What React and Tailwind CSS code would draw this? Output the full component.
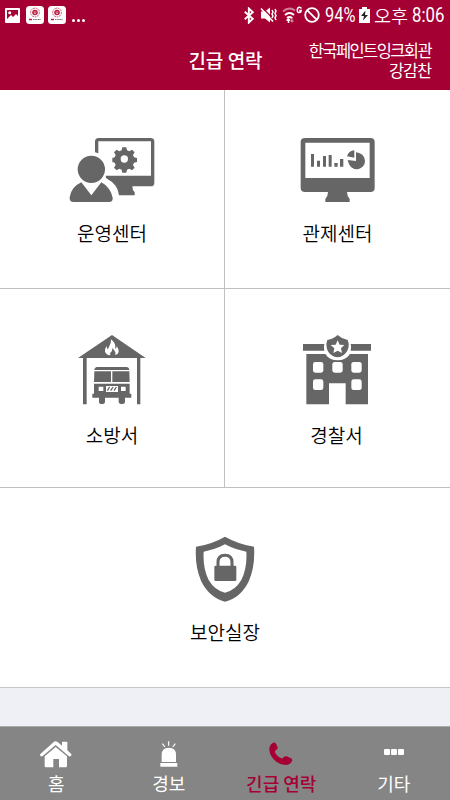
import React from "react";

function OperationIcon() {
  return (
    <svg className="h-[66px] w-[86px] fill-[#666]" viewBox="27 21 258 198">
      <path d="M105 67V35q0-11 11-11h156q11 0 11 11v123q0 11-11 11h-55q0 12 7 18v9h-47q-3-33-36-50-4-2-4-9h136V34H115v36z" />
      <circle cx="94" cy="118" r="41" />
      <path d="M64 157l30 39 30-39q14 7 23 20 9 13 11 26 1 13-11 13H41q-14 0-12-14 4-31 35-45z" />
      <path
        fillRule="evenodd"
        d="M187 52h12l2 9 7 3 8-5 8 8-5 8 3 7 9 2v12l-9 2-3 7 5 8-8 8-8-5-7 3-2 9h-12l-2-9-7-3-8 5-8-8 5-8-3-7-7-2V84l7-2 3-7-5-8 8-8 8 5 7-3zM193 76a11 11 0 100 22 11 11 0 000-22z"
      />
    </svg>
  );
}

function MonitorIcon() {
  return (
    <svg className="h-[66px] w-[75px] fill-[#666]" viewBox="45 21 225 198">
      <path
        fillRule="evenodd"
        d="M60 24h196q13 0 13 12v137q0 13-13 13h-70q0 12 8 21v9h-73v-9q8-9 8-21H60q-13 0-13-13V36q0-12 13-12zM61 38v106h193V38z"
      />
      <path d="M78 72h9v38h-9zM96 92h9v18h-9zM114 78h9v32h-9zM131 75h9v35h-9zM148 99h10v11h-10zM165 87h10v23h-10z" />
      <path d="M213 93l-25-3q4 17 13 23 13 8 25 2 13-6 14-21 0-20-20-26-3-1-7-1z" />
      <path d="M208 83V61q-17 1-22 18z" />
    </svg>
  );
}

function FireStationIcon() {
  return (
    <svg className="h-[71px] w-[68px] fill-[#666]" viewBox="39 27 204 213">
      <path d="M141 30L242 99H226V238H216V99H65V238H54V99H39z" />
      <path
        fill="#fff"
        d="M138 43q15 11 13 29 5-3 4-9 7 9 6 18-2 8-11 9 4-6-1-12-3-4-7-9 1 9-5 13-3 4-1 9-13-2-16-11-1-9 5-17l2 10q3-1 5-8 7-9 6-22z"
      />
      <path d="M95 126h91q7 1 7 9H88q0-8 7-9zM88 139h50v32H87zM142 139h51l1 32h-52zM87 176h107v30h5v12h-19v13q0 6-8 6-11 0-11-7v-12h-41v12q0 7-10 7-8 0-8-7v-12H82v-12h5z" />
      <path fill="#fff" d="M101 185h14v13h-14zM168 185h14v13h-14zM123 183h36v18h-36z" />
      <path
        fill="none"
        stroke="#666"
        strokeWidth="4"
        d="M127 197l7-11M137 197l7-11M147 197l7-11"
      />
    </svg>
  );
}

function PoliceStationIcon() {
  return (
    <svg className="h-[71px] w-[68px] fill-[#666]" viewBox="39 27 204 213">
      <path d="M39 57h64q-3 11 0 20H39zM182 57h61v20h-61q3-10 0-20zM49 87h57q12 19 37 19 24 0 37-19h54v151h-67v-63h-50v63H49z" />
      <path d="M143 30q13 12 30 15 7 17-1 32-10 18-29 20-21-2-30-20-7-17-1-32 18-3 31-15z" />
      <path fill="#fff" d="M143 46l6 13 14 1-10 10 3 14-13-7-13 7 3-14-11-10 15-1z" />
      <g fill="#fff">
        <rect x="69" y="111" width="31" height="32" rx="7" />
        <rect x="127" y="111" width="31" height="32" rx="7" />
        <rect x="184" y="111" width="31" height="32" rx="7" />
        <rect x="69" y="163" width="31" height="32" rx="7" />
        <rect x="184" y="163" width="31" height="32" rx="7" />
      </g>
    </svg>
  );
}

function SecurityIcon() {
  return (
    <svg className="h-[66px] w-[60px] fill-[#666]" viewBox="45 18 180 198">
      <path
        fillRule="evenodd"
        d="M135 20q41 23 87 30 4 57-15 102-24 51-72 63-48-13-72-63-19-45-15-102 47-7 87-30zM135 43q-30 16-64 22-3 48 15 85 18 31 49 38 31-7 49-38 18-37 15-85-34-6-64-22z"
      />
      <path d="M107 107h58q4 0 4 4v38q0 4-4 4h-58q-4 0-4-4v-38q0-4 4-4z" />
      <path fill="none" stroke="#666" strokeWidth="9" d="M114 109V97q0-21 21-21t21 21v12" />
    </svg>
  );
}

function HomeIcon() {
  return (
    <svg className="h-[27px] w-8 fill-white" viewBox="121 182 96 81">
      <path d="M163 184q5-3 10 0l14 12v-10q0-2 2-2h12q2 0 2 2v24l11 10q3 3 0 6-3 4-7 1l-39-33-39 33q-5 3-7-1-2-4 1-6z" />
      <path d="M168 200l34 28v29q0 4-4 4h-20v-25h-17v25h-22q-4 0-4-4v-29z" />
    </svg>
  );
}

function SirenIcon() {
  return (
    <svg className="h-[27px] w-[18px] fill-white" viewBox="479 181 54 81">
      <path d="M484 244v-22q0-21 22-21 21 0 21 21v22zM480 247h51v11h-51z" />
      <path fill="none" stroke="#fff" strokeWidth="3.5" d="M505 182v13M486 189l8 10M525 189l-8 10" />
    </svg>
  );
}

function PhoneIcon() {
  return (
    <svg className="h-6 w-6 fill-[#a50034]" viewBox="134 183 72 72">
      <path d="M145 186q6-4 10 2l5 11q1 5-5 8-4 2-3 7 6 13 19 18 4 1 7-3 4-5 9-3l13 6q6 4 2 10-6 10-19 10-19-1-33-15-16-16-15-36 2-11 10-15z" />
    </svg>
  );
}

function StatusIcons() {
  return (
    <div className="flex h-[30px] items-center text-white">
      <svg className="h-[17px] w-3" viewBox="0 0 12 18" fill="none" stroke="currentColor" strokeWidth="2">
        <path d="M1.5 5L10 12.5 5.8 16.5V1.5L10 5.5 1.5 13" />
      </svg>
      <svg className="ml-[5px] h-4 w-[17px]" viewBox="0 0 17 16" fill="currentColor">
        <path d="M1 4.500h4l5-4v15l-5-4H1z" />
        <path d="M2 0l12 13" stroke="#a50034" strokeWidth="1.200" />
        <path d="M1 1.500l12 13" stroke="currentColor" strokeWidth="1.600" />
        <path d="M12 3l1 2-1 2 1 2-1 2M15 2l1 2-1 2.500 1 2-1 2.500 1 2" fill="none" stroke="currentColor" strokeWidth="1.500" />
      </svg>
      <svg className="ml-[5px] h-[18px] w-[21px]" viewBox="0 0 21 18" fill="none" stroke="currentColor">
        <path d="M1 5.500Q7 0 13 4.500" strokeWidth="1.900" opacity=".5" />
        <path d="M3 9Q7.500 5 12 9M5 12Q7.500 10 10 12" strokeWidth="2" />
        <path d="M6.500 17v-4M4.500 14.500L6.500 13l1.500 1.500" strokeWidth="1.500" />
        <path d="M10 11v5M8.500 14.500L10 16l1.500-1.500" strokeWidth="1.200" opacity=".5" />
        <path d="M19.500 2.500Q18.500 1 17 1.200 15.300 1.500 15.300 4.200t1.900 2.300q2-.2 2-2h-2" strokeWidth="1.500" />
      </svg>
      <svg className="ml-px h-4 w-4" viewBox="0 0 16 16" fill="none" stroke="currentColor" strokeWidth="1.800">
        <circle cx="8" cy="8" r="6.800" />
        <path d="M3.300 3.300l9.400 9.400" />
      </svg>
      <span className="ml-[5px] w-[31px] origin-left scale-x-[0.82] text-[20px] leading-[30px]">94%</span>
      <svg className="ml-[3px] h-4 w-[11px]" viewBox="0 0 11 16">
        <path d="M3 0h5v2h3v14H0V2h3z" fill="white" />
        <path d="M6.500 3.500L2 9h3l-1 4.500L9 8H6z" fill="#222" />
      </svg>
      <span className="ml-1 w-[34px] font-['Noto_Sans_CJK_KR',sans-serif] text-[18.500px] leading-[30px] font-[350] whitespace-nowrap">오후</span>
      <span className="ml-[4px] w-8 origin-left scale-x-[0.84] text-[20px] leading-[30px]">8:06</span>
    </div>
  );
}

function AppBadge() {
  return (
    <svg className="h-[18px] w-[18px]" viewBox="0 0 18 18">
      <rect width="18" height="18" rx="3.500" fill="white" />
      <circle cx="9" cy="6.500" r="4.400" fill="none" stroke="#c23c5c" strokeWidth=".8" strokeDasharray="2 .6" />
      <circle cx="9" cy="6.500" r="2.800" fill="#b91c3e" />
      <path d="M7.500 6h3M8 7.500h2" stroke="white" strokeWidth=".6" />
      <path d="M3 13.500h3" stroke="#b91c3e" strokeWidth="1.500" />
      <path d="M7 13.500h8" stroke="#777" strokeWidth="1" strokeDasharray="1.200 .4" />
    </svg>
  );
}

function Tile({ icon, label, className = "" }) {
  return (
    <button className={`flex flex-col items-center bg-white ${className}`}>
      {icon}
      <span className="mt-[15px] text-[19px] leading-[30px] font-[350] text-black">{label}</span>
    </button>
  );
}

function NavItem({ icon, label, active = false }) {
  return (
    <button className={`flex flex-col items-center pt-3 ${active ? "text-[#a50034]" : "text-white"}`}>
      <span className="flex h-[30px] items-center">{icon}</span>
      <span className={`text-[18px] leading-7 whitespace-nowrap ${active ? "font-medium" : ""}`}>{label}</span>
    </button>
  );
}

export default function App() {
  return (
    <div className="flex h-[800px] w-[450px] flex-col overflow-hidden bg-[#eff0f5] font-['Noto_Sans_CJK_KR',sans-serif]">
      <div className="flex h-[30px] items-center justify-between bg-[#a50034] pr-[6px] pl-[5px] font-[Roboto,sans-serif]">
        <div className="flex items-center">
          <svg className="h-[15px] w-[15px]" viewBox="0 0 15 15">
            <rect width="15" height="15" rx="1" fill="white" />
            <path d="M2 2h11v6l-2-2-3 3-2-2-4 4z" fill="#a50034" />
            <circle cx="4.700" cy="4.700" r="1.500" fill="white" />
          </svg>
          <div className="ml-[6px] flex gap-1">
            <AppBadge />
            <AppBadge />
          </div>
          <span className="ml-[6px] flex gap-[2px] pt-[11px]">
            <i className="size-[3px] rounded-full bg-white" />
            <i className="size-[3px] rounded-full bg-white" />
            <i className="size-[3px] rounded-full bg-white" />
          </span>
        </div>
        <StatusIcons />
      </div>
      <header className="flex h-[60px] items-center bg-[#a50034] text-white">
        <h1 className="ml-[150px] w-[151px] text-center text-[19px] leading-7 font-medium whitespace-nowrap">긴급 연락</h1>
        <p className="flex w-[149px] flex-col items-end pr-[19px] text-[16.500px] leading-5 tracking-[-1.600px] whitespace-nowrap">
          <span>한국페인트잉크회관</span>
          <span className="tracking-[-1.200px]">강감찬</span>
        </p>
      </header>
      <main className="grid grid-cols-[224px_225px] gap-px border-b border-[#c5c7c7] bg-[#c0c0c0]">
        <Tile className="h-[198px] pt-[47px]" icon={<OperationIcon />} label="운영센터" />
        <Tile className="h-[198px] pt-[47px]" icon={<MonitorIcon />} label="관제센터" />
        <Tile className="h-[198px] pt-[45px]" icon={<FireStationIcon />} label="소방서" />
        <Tile className="h-[198px] pr-[2px] pt-[45px]" icon={<PoliceStationIcon />} label="경찰서" />
        <Tile className="col-span-2 h-[199px] pt-[48px]" icon={<SecurityIcon />} label="보안실장" />
      </main>
      <nav className="mt-auto grid h-[74px] grid-cols-4 border-t border-[#a8aaa8] bg-[#858585]">
        <NavItem icon={<HomeIcon />} label="홈" />
        <NavItem icon={<SirenIcon />} label="경보" />
        <NavItem icon={<PhoneIcon />} label="긴급 연락" active />
        <NavItem
          icon={
            <span className="mb-[5px] flex gap-px">
              <i className="size-[6px] rounded-[1px] bg-white" />
              <i className="size-[6px] rounded-[1px] bg-white" />
              <i className="size-[6px] rounded-[1px] bg-white" />
            </span>
          }
          label="기타"
        />
      </nav>
    </div>
  );
}
